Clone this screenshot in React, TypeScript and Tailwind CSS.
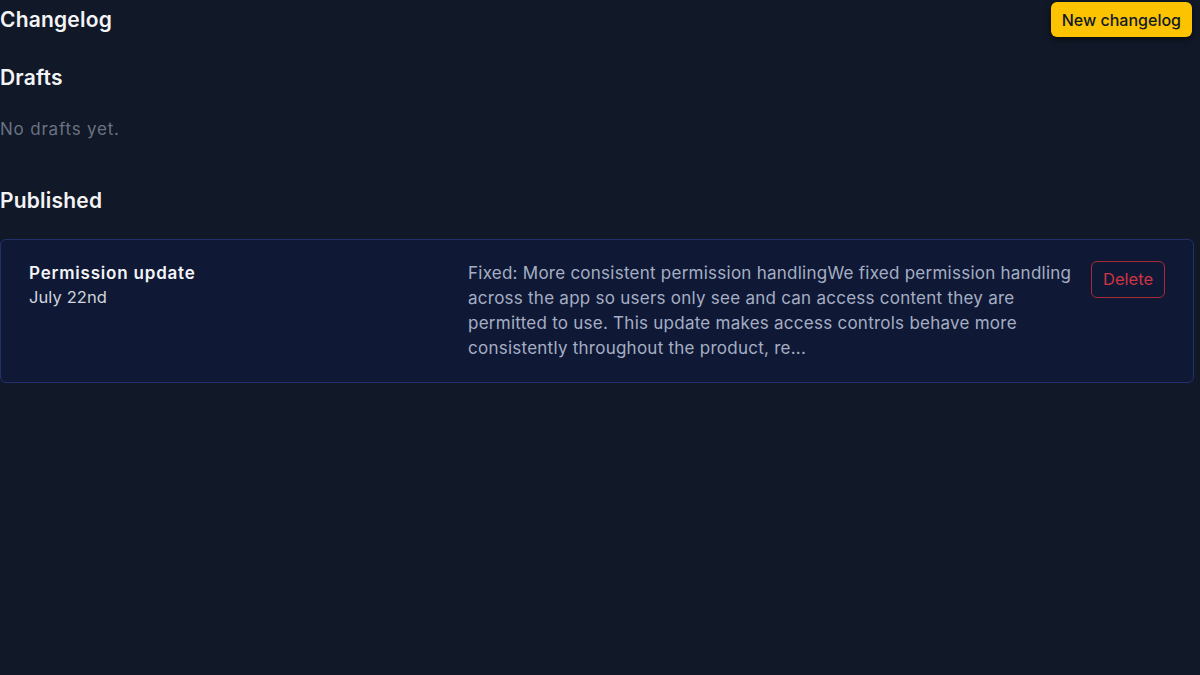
interface Entry {
  id: number
  title: string
  date: string
  body: string
}

const published: Entry[] = [
  {
    id: 1,
    title: "Permission update",
    date: "July 22nd",
    body:
      "Fixed: More consistent permission handlingWe fixed permission handling across the app so users only see and can access content they are permitted to use. This update makes access controls behave more consistently throughout the product, re...",
  },
]

export default function App() {
  return (
    <div
      className="min-h-[675px] w-full bg-[#111827] text-gray-100"
      style={{ fontFamily: "Inter, 'Noto Sans', sans-serif" }}
    >
      <div className="w-[1194px]">
        <header className="flex h-[39px] items-center justify-between">
          <h1 className="text-[21px] font-semibold leading-7 tracking-[0.2px] text-gray-100">Changelog</h1>
          <button className="mr-[2px] h-[35px] rounded-md bg-[#fcc400] px-[11px] text-base font-medium text-gray-900 shadow-[0_2px_6px_rgba(0,0,0,0.6)]">
            New changelog
          </button>
        </header>

        <section className="mt-[25px]">
          <h2 className="text-[21px] font-semibold leading-7 tracking-[0.2px] text-gray-100">Drafts</h2>
          <p className="mt-[25px] text-[17px] leading-6 tracking-[0.8px] text-gray-500">No drafts yet.</p>
        </section>

        <section className="mt-[46px]">
          <h2 className="text-[21px] font-semibold leading-7 tracking-[0.2px] text-gray-100">Published</h2>
          <div className="mt-[24px] space-y-4">
            {published.map((entry) => (
              <div
                key={entry.id}
                className="flex items-start rounded-md border border-[#22316b] bg-[#0f1936] px-7 py-[21px]"
              >
                <div className="flex-1">
                  <p className="text-[17px] font-semibold leading-6 tracking-[0.8px] text-gray-100">{entry.title}</p>
                  <p className="text-[16.5px] leading-6 tracking-[0.1px] text-gray-300">{entry.date}</p>
                </div>
                <p className="w-[606px] text-[17px] leading-[25px] tracking-[0.25px] text-[#a6aec3]">{entry.body}</p>
                <button className="ml-[17px] h-[37px] w-[74px] rounded-md border border-[#a82c38] text-[16.5px] text-[#d03442]">
                  Delete
                </button>
              </div>
            ))}
          </div>
        </section>
      </div>
    </div>
  )
}
